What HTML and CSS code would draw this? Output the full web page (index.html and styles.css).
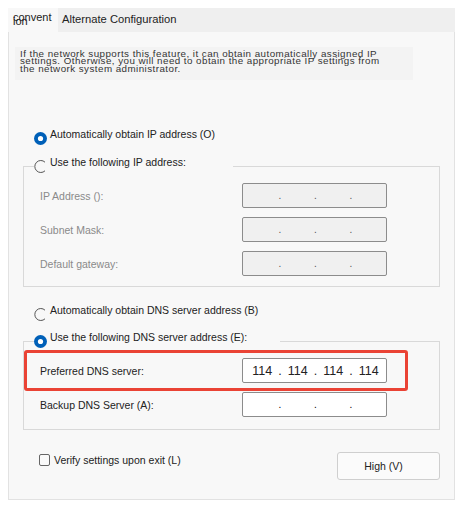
FILE: index.html
```html
<!DOCTYPE html>
<html>
<head>
<meta charset="utf-8">
<link rel="stylesheet" href="styles.css">
</head>
<body>
<div class="window">
  <div class="tabs">
    <div class="tab tab-active"><span class="tab-l1">convent</span><span class="tab-l2">ion</span></div>
    <div class="tab tab-alt">Alternate Configuration</div>
  </div>
  <div class="panel">
    <p class="intro">If the network supports this feature, it can obtain automatically assigned IP<br>settings. Otherwise, you will need to obtain the appropriate IP settings from<br>the network system administrator.</p>

    <div class="radio-row row-ip-auto">
      <svg class="radio" width="13" height="13" viewBox="0 0 13 13"><circle cx="6.5" cy="6.5" r="6.5" fill="#0060b8"/><circle cx="6.5" cy="6.5" r="2.6" fill="#fff"/></svg>
      <span class="radio-text">Automatically obtain IP address (O)</span>
    </div>

    <fieldset class="group group-ip">
      <legend class="legend legend-ip">
        <svg class="radio" width="13" height="13" viewBox="0 0 13 13"><path d="M11 2.2 A6 6 0 1 0 11 10.8" fill="none" stroke="#555" stroke-width="1"/></svg>
        <span class="radio-text">Use the following IP address:</span>
      </legend>
      <div class="field-row row-first disabled">
        <span class="field-label">IP Address ():</span>
        <div class="ip ip-disabled"><span class="seg"></span><span class="dot">.</span><span class="seg"></span><span class="dot">.</span><span class="seg"></span><span class="dot">.</span><span class="seg"></span></div>
      </div>
      <div class="field-row disabled">
        <span class="field-label">Subnet Mask:</span>
        <div class="ip ip-disabled"><span class="seg"></span><span class="dot">.</span><span class="seg"></span><span class="dot">.</span><span class="seg"></span><span class="dot">.</span><span class="seg"></span></div>
      </div>
      <div class="field-row disabled">
        <span class="field-label">Default gateway:</span>
        <div class="ip ip-disabled"><span class="seg"></span><span class="dot">.</span><span class="seg"></span><span class="dot">.</span><span class="seg"></span><span class="dot">.</span><span class="seg"></span></div>
      </div>
    </fieldset>

    <div class="radio-row row-dns-auto">
      <svg class="radio" width="13" height="13" viewBox="0 0 13 13"><path d="M11 2.2 A6 6 0 1 0 11 10.8" fill="none" stroke="#555" stroke-width="1"/></svg>
      <span class="radio-text">Automatically obtain DNS server address (B)</span>
    </div>

    <fieldset class="group group-dns">
      <legend class="legend legend-dns">
        <svg class="radio" width="13" height="13" viewBox="0 0 13 13"><circle cx="6.5" cy="6.5" r="6.5" fill="#0060b8"/><circle cx="6.5" cy="6.5" r="2.6" fill="#fff"/></svg>
        <span class="radio-text">Use the following DNS server address (E):</span>
      </legend>
      <div class="field-row highlight">
        <span class="field-label">Preferred DNS server:</span>
        <div class="ip ip-filled"><span class="seg">114</span><span class="dot">.</span><span class="seg">114</span><span class="dot">.</span><span class="seg">114</span><span class="dot">.</span><span class="seg">114</span></div>
      </div>
      <div class="field-row row-backup">
        <span class="field-label">Backup DNS Server (A):</span>
        <div class="ip ip-empty"><span class="seg"></span><span class="dot">.</span><span class="seg"></span><span class="dot">.</span><span class="seg"></span><span class="dot">.</span><span class="seg"></span></div>
      </div>
    </fieldset>

    <div class="footer">
      <label class="check"><span class="check-box"></span><span class="check-text">Verify settings upon exit (L)</span></label>
      <button class="btn">High (V)</button>
    </div>
  </div>
</div>
</body>
</html>
```

FILE: styles.css
```css
* { box-sizing: border-box; }
html, body { margin: 0; padding: 0; background: #fff; }
body {
  font-family: "Liberation Sans", Arial, sans-serif;
  font-size: 10.5px;
  color: #222;
}
.window {
  margin: 8px 0 0 8px;
  width: 447px;
}
.tabs {
  display: flex;
  height: 24px;
  background: #efefef;
}
.tab {
  font-size: 11.2px;
  color: #222;
}
.tab-active {
  width: 50px;
  background: #f8f8f8;
  display: flex;
  flex-direction: column;
  padding: 5px 0 0 5px;
  line-height: 5px;
  font-size: 11px;
}
.tab-l1, .tab-l2 { display: block; height: 4px; line-height: 9px; }
.tab-alt {
  padding: 5px 0 0 4px;
  line-height: 12px;
}
.panel {
  height: 468px;
  background: #f8f8f8;
  border: 1px solid #e2e2e2;
  border-top: none;
  padding-top: 15px;
  display: flex;
  flex-direction: column;
  align-items: flex-start;
}
.intro {
  margin: 0 0 0 6px;
  width: 398px;
  height: 33px;
  padding: 3px 5px;
  background: #f3f3f3;
  line-height: 7.35px;
  font-size: 9.8px;
  letter-spacing: 0.45px;
  white-space: nowrap;
  color: #333;
}
.radio-row {
  display: flex;
  align-items: flex-start;
  margin-left: 25px;
}
.radio { flex: none; margin-top: 4px; display: block; }
.radio-text { line-height: 13px; margin-left: 3px; color: #222; white-space: nowrap; }
.row-ip-auto { margin-top: 48px; }
.row-dns-auto { margin-top: 17px; }

.group {
  margin: 0 0 0 14px;
  padding: 0;
  width: 417px;
  border: 1px solid #d9d9d9;
  min-width: 0;
}
.group-ip { margin-top: 11px; padding-bottom: 10px; }
.group-dns { margin-top: 10px; padding-bottom: 12px; }
.legend {
  display: flex;
  align-items: flex-start;
  margin-left: 10px;
  padding: 0 0 7px 0;
  height: 20px;
}
.legend-ip { width: 199px; }
.legend-dns { width: 246px; }

.field-row {
  display: flex;
  align-items: center;
  padding-left: 16px;
  height: 25px;
  margin-top: 9px;
}
.row-first { margin-top: 7px; }
.field-label { width: 202px; flex: none; }
.disabled .field-label { color: #8a8a8a; }
.ip {
  width: 145px;
  height: 25px;
  border: 1px solid #8c8c8c;
  border-radius: 2px;
  display: flex;
  align-items: center;
  padding: 0 1.5px 0 3.5px;
}
.ip-disabled { background: #f0f0f0; }
.ip-filled, .ip-empty { background: #fff; }
.seg { width: 31.5px; text-align: center; flex: none; }
.dot { width: 4px; text-align: center; flex: none; line-height: 10px; }
.ip-disabled .dot { color: #555; font-size: 10px; }
.ip-empty .dot { color: #000; font-size: 10px; }
.ip-filled { font-size: 12.5px; color: #222; }
.ip-filled .dot { font-size: 12.5px; }

.highlight {
  margin-top: -1px;
  height: 41px;
  width: 384px;
  border: 3px solid #ea4335;
  border-radius: 3px;
  padding-left: 13px;
}
.row-backup { margin-top: 1px; }

.footer {
  margin: 22px 0 0 14px;
  width: 417px;
  display: flex;
  align-items: flex-start;
  justify-content: space-between;
}
.check {
  display: flex;
  align-items: center;
  margin: 2px 0 0 16px;
}
.check-box {
  width: 11px;
  height: 12px;
  border: 1px solid #666;
  border-radius: 2px;
  background: #fafafa;
}
.check-text { margin-left: 4px; line-height: 12px; color: #222; }
.btn {
  width: 103px;
  height: 28px;
  background: #fbfbfb;
  border: 1px solid #cfcfcf;
  border-radius: 3px;
  font-family: "Liberation Sans", Arial, sans-serif;
  font-size: 10.5px;
  color: #222;
  padding: 0 10px 0 0;
}
```
